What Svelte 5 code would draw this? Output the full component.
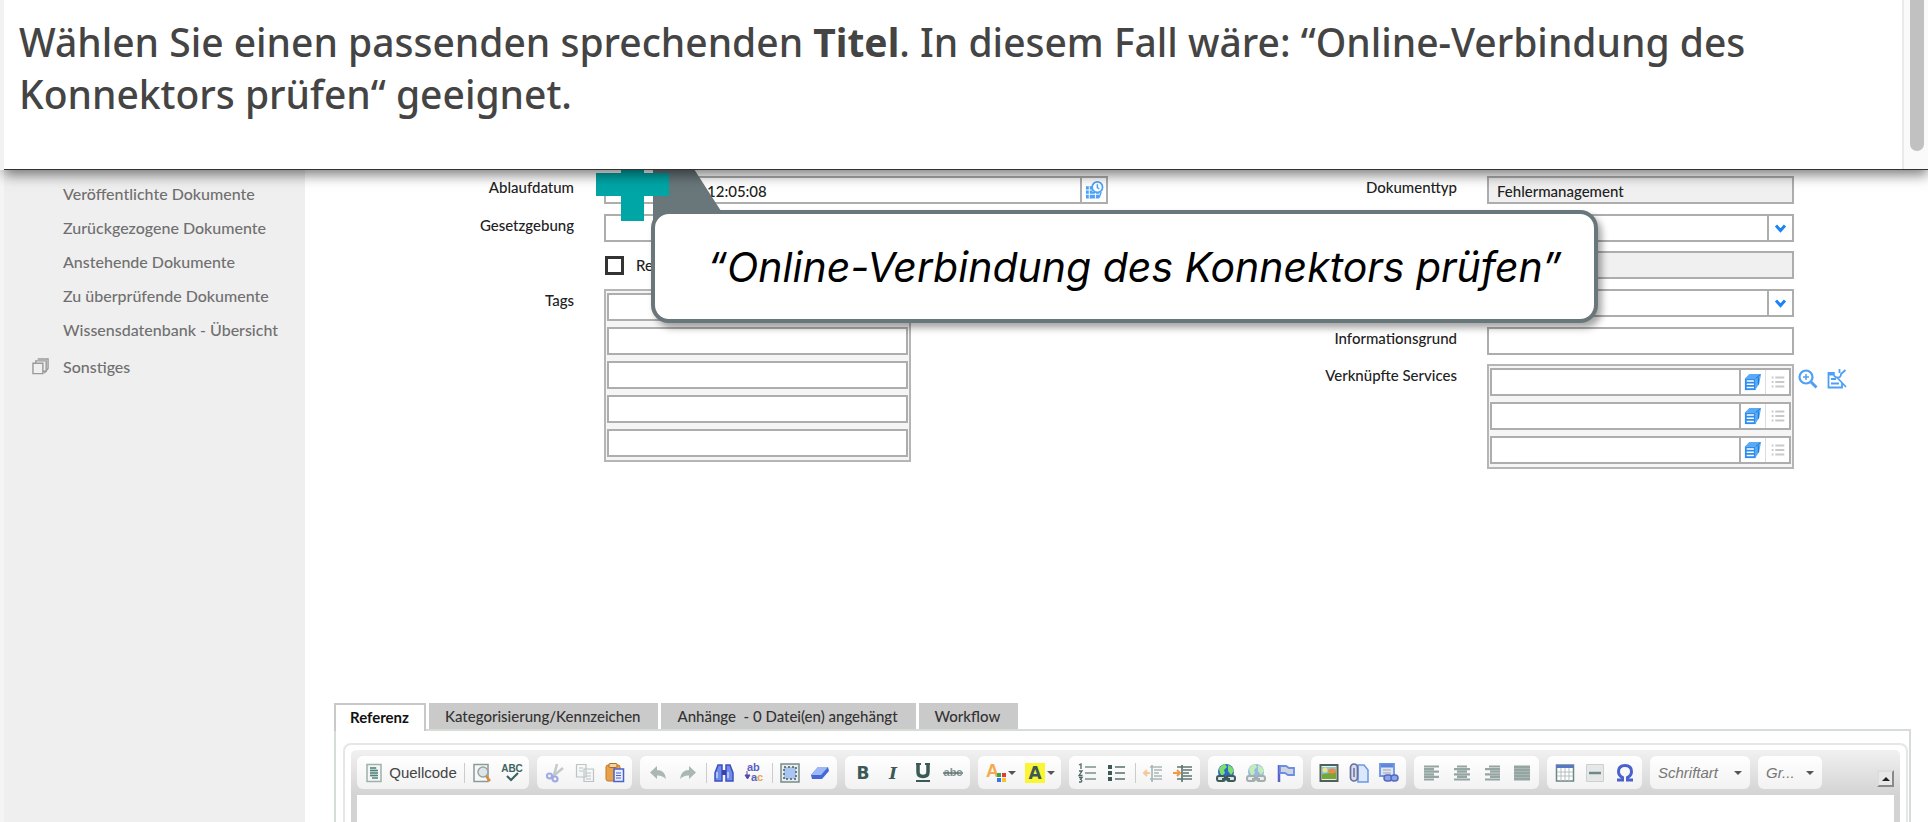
<script>
  const documents = [
    'Veröffentlichte Dokumente',
    'Zurückgezogene Dokumente',
    'Anstehende Dokumente',
    'Zu überprüfende Dokumente',
    'Wissensdatenbank - Übersicht'
  ];
  const tabs = ['Referenz', 'Kategorisierung/Kennzeichen', 'Anhänge \u00a0- 0 Datei(en) angehängt', 'Workflow'];
  let active = $state(0);

  const globe = '<circle cx="10" cy="9" r="8" fill="#2f66c8"/><path d="M3 6Q5 2 9 1L11 4 8 7 9 10 6 13 4 10ZM12 2Q16 3 18 8L15 12 12 8Z" fill="#7be06a"/><g fill="#dfe5e3" stroke="#3d5b58" stroke-width="2"><rect x="1" y="13" width="8" height="5" rx="2"/><rect x="11" y="13" width="8" height="5" rx="2"/><path d="M6 16H14"/></g>';
  const glyph = (t, attrs = '') => `<text x="10" y="16" text-anchor="middle" font-family="DejaVu Sans" font-size="17" font-weight="bold" fill="#3b5a57" ${attrs}>${t}</text>`;
  const lines = (rows, color = '#94a5a2') => `<path stroke="${color}" stroke-width="2.2" d="${rows.map(([a, b], i) => `M${a} ${3.5 + i * 2.6}H${b}`).join('')}"/>`;

  const icons = {
    source: '<path d="M3 1.5H17V18.500H3Z" fill="#f3f6f5" stroke="#9fb0ad" stroke-width="1.500"/><path d="M6 4H13V14H6Z" fill="#cfe6dc"/><path d="M6 5H12M6 7.500H14M6 10H14M6 12.500H14M8 15H14" stroke="#55807c" stroke-width="1.300"/>',
    preview: '<path d="M2 1.500H16V18.500H2Z" fill="#f7f8f8" stroke="#8b9b99" stroke-width="1.500"/><circle cx="11" cy="9" r="5" fill="#dce5e8" stroke="#98a3a5" stroke-width="1.500"/><path d="M14 13L18 18" stroke="#e08a30" stroke-width="2.500"/>',
    spell: '<text x="10" y="9" text-anchor="middle" font-family="Liberation Sans" font-size="10" font-weight="bold" fill="#3b6460">ABC</text><path d="M5 13L9 17 16 10" fill="none" stroke="#3b6460" stroke-width="2.2"/>',
    cut: '<g opacity=".5"><path d="M12 1L9 12M18 5L7 14" stroke="#8c9c9c" stroke-width="2.500"/><circle cx="4.500" cy="13" r="2.500" fill="none" stroke="#4a5fd0" stroke-width="2.2"/><circle cx="10" cy="16" r="2.500" fill="none" stroke="#4a5fd0" stroke-width="2.2"/></g>',
    copy: '<g opacity=".5" fill="#f4f7f6" stroke="#7d9290" stroke-width="1.200"><path d="M1.500 1.500H11V14H1.500ZM9 6H18.500V18.500H9Z"/><path d="M4 5H8M4 8H8M11 10H16M11 13H16M11 16H16"/></g>',
    paste: '<rect x="1" y="2" width="14" height="16" rx="2" fill="#e9a04a" stroke="#c47b26"/><rect x="4" y="0.500" width="8" height="4" rx="1" fill="#f3d3a0" stroke="#a66d2d"/><path d="M9 6H18.500V18.500H9Z" fill="#e9efff" stroke="#4b62c8" stroke-width="1.500"/><path d="M11 10H16M11 12.500H16M11 15H16" stroke="#4b62c8"/>',
    undo: '<path d="M9 3V7Q17 7 18 16Q14 12 9 12.500V16L2 9.500Z" fill="#a9b7b5"/>',
    redo: '<path d="M11 3V7Q3 7 2 16Q6 12 11 12.500V16L18 9.500Z" fill="#a9b7b5"/>',
    find: '<path d="M4 2H8V18H1V10ZM16 2H12V18H19V10Z" fill="#6f8de8" stroke="#3c4fc0" stroke-width="1.500"/><path d="M8 7H12V12H8Z" fill="#3c3fae"/><path d="M3 9V15M14 9V15" stroke="#c6d6ff" stroke-width="1.500"/>',
    replace: '<g font-family="Liberation Sans" font-weight="bold" font-size="11"><text x="3" y="8" fill="#5a5fc4">ab</text><text x="7" y="18" fill="#5a5fc4">a</text><text x="13" y="18" fill="#f0a050">c</text></g><path d="M3 8V13M1 12H6L3.500 16Z" stroke="#5048a8" fill="#5048a8"/>',
    select: '<path d="M1 1H19V19H1Z" fill="#e8eeee" stroke="#7b8b8b" stroke-width="1.500"/><path d="M4 4H16V16H4Z" fill="#a9c6f3" stroke="#49615f" stroke-width="1.500" stroke-dasharray="2 2"/>',
    eraser: '<path d="M8 4H18L19 8 12 16H2L1 12Z" fill="#4468d8"/><path d="M8 4H18L11 12H1Z" fill="#9db9f8"/>',
    bold: glyph('B'),
    italic: glyph('I', 'font-style="italic" style="font-family:DejaVu Serif"'),
    underline: '<path d="M5 1V9Q5 13.500 10 13.500T15 9V1" fill="none" stroke="#3b5a57" stroke-width="3.500"/><path d="M3 1H8M12 1H17M3 18H17" stroke="#3b5a57" stroke-width="2"/>',
    strike: '<text x="10" y="13" text-anchor="middle" font-family="Liberation Sans" font-weight="bold" font-size="11" fill="#81938f">abc</text><path d="M0 10H20" stroke="#5c7370" stroke-width="1.500"/>',
    color: '<text x="0" y="14" font-family="Liberation Sans" font-size="18" font-weight="bold" fill="#f6a94f">A</text><path d="M11 10H15V14H11Z" fill="#36a648"/><path d="M16 10H20V14H16Z" fill="#e5392e"/><path d="M11 15H15V19H11Z" fill="#3d73e8"/><path d="M16 15H20V19H16Z" fill="#f5c32c"/>',
    highlight: '<path d="M0 0H20V20H0Z" fill="#fbf632"/>' + glyph('A'),
    numbered: '<path d="M8 4H19M8 10H19M8 16H19" stroke="#7b918e" stroke-width="1.700"/><path d="M2 2L4 1V6M2 8H5L2 12.500H5.500M2 14.500H5L3.500 16.500Q6 17.500 4 19H2" fill="none" stroke="#4c6966" stroke-width="1.300"/>',
    bullets: '<path d="M8 4H18M8 10H18M8 16H18" stroke="#55706d" stroke-width="1.700"/><path d="M1 2H5V6H1ZM1 8H5V12H1ZM1 14H5V18H1Z" fill="#3b5a57"/>',
    outdent: '<g opacity=".5"><path d="M7 10H1M4 7L1 10 4 13" stroke="#f09a45" stroke-width="2" fill="none"/><path d="M9 2V19M7 4H19M11 7H19M11 10H16M11 13H19M7 16H19" stroke="#5d7774" stroke-width="1.700"/></g>',
    indent: '<path d="M0 10H6M4 7L7 10 4 13" stroke="#f09a45" stroke-width="2" fill="none"/><path d="M9 2V19M4 4H19M10 7H19M10 10H16M10 13H19M4 16H19" stroke="#5d7774" stroke-width="1.700"/>',
    link: globe,
    unlink: `<g opacity=".45">${globe}</g>`,
    anchor: '<path d="M3 2V19" stroke="#5a62c8" stroke-width="2.500"/><path d="M4 3H10L13 5H18V12H12L9 10H4Z" fill="#cfd5dd" stroke="#6b8ce8" stroke-width="1.800"/>',
    image: '<path d="M1.500 2H18.500V18H1.500Z" fill="#eaf0d0" stroke="#50605e" stroke-width="2"/><path d="M3 4H17V11H3Z" fill="#7cc8f0"/><path d="M3 11L17 9V16H3Z" fill="#76a63c"/><ellipse cx="13" cy="8" rx="4" ry="2.500" fill="#f08a3c"/><circle cx="6" cy="7" r="2.500" fill="#f8e080"/>',
    attach: '<path d="M9 2H15L19 7V19H9Z" fill="#dbe8fb" stroke="#6a97e8" stroke-width="1.500"/><rect x="1.500" y="1" width="7" height="17" rx="3.500" fill="#d7dbee" stroke="#6a6f9c" stroke-width="1.700"/><path d="M5 5V14" stroke="#6a6f9c" stroke-width="1.500"/>',
    form: '<path d="M1 1H15V13H1Z" fill="#dbe6f8" stroke="#6d93e0" stroke-width="1.800"/><path d="M2 3H14" stroke="#5d86de" stroke-width="3"/><path d="M4 7H12M4 10H12" stroke="#c2c6cc" stroke-width="2"/><g fill="#8fa4e8" stroke="#5468c0" stroke-width="1.500"><rect x="5" y="12" width="8" height="6" rx="3"/><rect x="12" y="12" width="7" height="6" rx="3"/></g>',
    left: lines([[2, 17], [2, 12], [2, 17], [2, 12], [2, 17], [2, 12]]),
    center: lines([[5, 15], [2, 18], [5, 15], [2, 18], [5, 15], [2, 18]]),
    right: lines([[7, 18], [3, 18], [8, 18], [3, 18], [8, 18], [3, 18]]),
    justify: '<path d="M2 2.500H18V17.500H2Z" fill="#94a5a2"/><path d="M2 5.500H18M2 8.500H18M2 11.500H18M2 14.500H18" stroke="#a9b7b5"/>',
    table: '<path d="M1.500 2H18.500V18H1.500Z" fill="#fff" stroke="#6d8583" stroke-width="1.500"/><path d="M1 3.500H19" stroke="#5578c8" stroke-width="3"/><path d="M2 9H18M2 13H18M6 5V18M10 5V18M14 5V18" stroke="#b4c0be"/>',
    rule: '<path d="M1.500 1.500H18.500V18.500H1.500Z" fill="#e6e8e8" stroke="#ccd0d0"/><path d="M4 10H16" stroke="#6d8a88" stroke-width="2.500"/>',
    omega: '<path d="M2 17H7.500V14.500Q3.500 12.500 3.500 8.500Q3.500 2.500 10 2.500T16.500 8.500Q16.500 12.500 12.500 14.500V17H18" fill="none" stroke="#4a62cc" stroke-width="3"/>'
  };

  const groups = [
    [['cut', 'Ausschneiden'], ['copy', 'Kopieren'], ['paste', 'Einfügen']],
    [['undo', 'Rückgängig'], ['redo', 'Wiederherstellen'], null, ['find', 'Suchen'], ['replace', 'Ersetzen'], null, ['select', 'Alles auswählen'], ['eraser', 'Formatierung entfernen']],
    [['bold', 'Fett'], ['italic', 'Kursiv'], ['underline', 'Unterstrichen'], ['strike', 'Durchgestrichen']],
    [['color', 'Textfarbe', true], ['highlight', 'Hintergrundfarbe', true]],
    [['numbered', 'Nummerierte Liste'], ['bullets', 'Liste'], null, ['outdent', 'Einzug verkleinern'], ['indent', 'Einzug vergrößern']],
    [['link', 'Link'], ['unlink', 'Link entfernen'], ['anchor', 'Anker']],
    [['image', 'Bild'], ['attach', 'Anhang'], ['form', 'Verknüpfung']],
    [['left', 'Linksbündig'], ['center', 'Zentriert'], ['right', 'Rechtsbündig'], ['justify', 'Blocksatz']],
    [['table', 'Tabelle'], ['rule', 'Linie'], ['omega', 'Sonderzeichen']]
  ];
</script>

{#snippet icon(name)}
  <svg class="icon" viewBox="0 0 20 20" aria-hidden="true">{@html icons[name]}</svg>
{/snippet}

{#snippet dropdown(label)}
  <div class="field combo">
    <select aria-label={label}></select>
    <svg class="chevron" viewBox="0 0 12 9" aria-hidden="true"><path d="M1.500 1.500L6 6.500 10.500 1.500" fill="none" stroke="#1a84f5" stroke-width="3" /></svg>
  </div>
{/snippet}

<div class="page">
  <header class="instruction">
    <p>Wählen Sie einen passenden sprechenden <strong>Titel</strong>. In diesem Fall wäre: “Online-Verbindung des Konnektors prüfen“ geeignet.</p>
    <div class="track"><div class="thumb"></div></div>
  </header>

  <div class="workspace">
    <nav class="sidebar">
      <ul>
        {#each documents as item}
          <li><a href="#doc">{item}</a></li>
        {/each}
        <li class="other">
          <svg viewBox="0 0 18 18" aria-hidden="true"><g fill="#efefef" stroke="#9a9a9a" stroke-width="1.500"><path d="M6 1H17V11L13 16" /><path d="M4 3H15V14H4Z" /><path d="M1 5.500H11.500V16.500H1Z" /></g></svg>
          <a href="#other">Sonstiges</a>
        </li>
      </ul>
    </nav>

    <main>
      <form class="form">
        <div class="column left">
          <label for="expiry">Ablaufdatum</label>
          <div class="field date">
            <input id="expiry" value="12:05:08" />
            <button type="button" aria-label="Datum wählen">
              <svg viewBox="0 0 20 20" aria-hidden="true"><path d="M1 6H8V19H1ZM8 12H15V19H8Z" fill="#4da3f7" /><path d="M1 10H8M1 14.500H15M4.500 6V19M11 13V19" stroke="#fff" /><circle cx="13" cy="7" r="5.500" fill="#fff" stroke="#4da3f7" stroke-width="1.800" /><path d="M13 4V7.500L15 9M17 12L15 18" fill="none" stroke="#4da3f7" stroke-width="1.500" /></svg>
            </button>
          </div>
          <label for="law">Gesetzgebung</label>
          <div class="field"><input id="law" /></div>
          <span></span>
          <label class="check"><input type="checkbox" />Re</label>
          <label for="tag-0">Tags</label>
          <div class="list tags">
            {#each [0, 1, 2, 3, 4] as n}
              <div class="entry"><input id="tag-{n}" aria-label="Tags" /></div>
            {/each}
          </div>
        </div>

        <div class="column right">
          <label for="doctype">Dokumenttyp</label>
          <div class="field muted"><input id="doctype" value="Fehlermanagement" readonly /></div>
          <span></span>
          {@render dropdown('Auswahl')}
          <span></span>
          <div class="field muted"><input aria-label="Wert" readonly /></div>
          <span></span>
          {@render dropdown('Option')}
          <label for="reason">Informationsgrund</label>
          <div class="field"><input id="reason" /></div>
          <label for="service-0">Verknüpfte Services</label>
          <div class="services">
            <div class="list">
              {#each [0, 1, 2] as n}
                <div class="entry">
                  <input id="service-{n}" aria-label="Verknüpfte Services" />
                  <button type="button" class="pick" aria-label="Auswählen">
                    <svg viewBox="0 0 20 20" aria-hidden="true"><path d="M1 6L6 1H19L17 12 13 18V6Z" fill="#57aaf5" /><path d="M1 6H13V19H1Z" fill="#2d8cf0" /><path d="M3 9H11M3 12.500H11M3 16H11" stroke="#fff" stroke-width="1.700" /><path d="M13 6L18 2M16 5V13" stroke="#1c6fc8" /></svg>
                  </button>
                  <button type="button" class="details" aria-label="Liste">
                    <svg viewBox="0 0 20 20" aria-hidden="true"><path d="M3 5H5M7 5H17M3 10H5M7 10H17M3 15H5M7 15H17" stroke="#c9c9c9" stroke-width="2" /></svg>
                  </button>
                </div>
              {/each}
            </div>
            <div class="actions">
              <button type="button" aria-label="Suchen">
                <svg viewBox="0 0 20 20" aria-hidden="true"><g fill="none" stroke="#4da0f5"><circle cx="8" cy="8" r="6.500" stroke-width="2.200" /><path d="M13 13L18.500 18.500" stroke-width="3" /><path d="M8 5V11M5 8H11" stroke-width="1.500" /></g></svg>
              </button>
              <button type="button" aria-label="Bearbeiten">
                <svg viewBox="0 0 20 20" aria-hidden="true"><g fill="none" stroke="#4da0f5" stroke-width="1.800"><path d="M6 4H1.500V18.500H15V14M4 10H9M4 14.500H12" /><path d="M7 3Q6 8 10 8.500T14 5L18.500 1M12.500 0V4M10 8.500L19 18" /><path d="M2 5H7" stroke-width="3" /></g></svg>
              </button>
            </div>
          </div>
        </div>
      </form>

      <section class="reference">
        <div class="tabs" role="tablist">
          {#each tabs as tab, i}
            <button type="button" role="tab" aria-selected={i === active} class:active={i === active} onclick={() => (active = i)}>{tab}</button>
          {/each}
        </div>
        <div class="panel">
          <div class="editor">
            <div class="toolbar">
              <div class="group">
                <button type="button" class="source">{@render icon('source')}Quellcode</button>
                <i class="sep"></i>
                <button type="button" aria-label="Vorschau">{@render icon('preview')}</button>
                <button type="button" aria-label="Rechtschreibprüfung">{@render icon('spell')}</button>
              </div>
              {#each groups as group}
                <div class="group">
                  {#each group as tool}
                    {#if tool}
                      <button type="button" aria-label={tool[1]} class:menu={tool[2]}>
                        {@render icon(tool[0])}{#if tool[2]}<i class="caret"></i>{/if}
                      </button>
                    {:else}
                      <i class="sep"></i>
                    {/if}
                  {/each}
                </div>
              {/each}
              <button type="button" class="group style font">Schriftart<i class="caret"></i></button>
              <button type="button" class="group style">Gr...<i class="caret"></i></button>
              <button type="button" class="collapse" aria-label="Symbolleiste einklappen"><i></i></button>
            </div>
            <textarea aria-label="Referenz"></textarea>
          </div>
        </div>
      </section>
    </main>
  </div>

  <svg class="pointer" viewBox="0 0 125 56" aria-hidden="true">
    <path d="M57 0H98L125 42H75Q58 42 57 56Z" fill="#69767a" />
    <path d="M25 0H48V4H73V27H48V52H25V27H0V4H25Z" fill="#00a5a6" />
  </svg>
  <div class="callout">“Online-Verbindung des Konnektors prüfen”</div>
</div>

<style>
  :global(body) { margin: 0; background: #fff; }
  .page, .page * { box-sizing: border-box; }
  .page {
    position: relative;
    display: flex;
    flex-direction: column;
    height: 100vh;
    overflow: hidden;
    color: #222;
    font-family: Lato, "Noto Sans", sans-serif;
    font-size: 15px;
    font-weight: 500;
  }
  button, input, select, textarea { font: inherit; color: inherit; margin: 0; padding: 0; border: 0; background: none; border-radius: 0; outline: 0; }
  button { display: flex; align-items: center; justify-content: center; cursor: pointer; }
  input, select, textarea { min-width: 0; width: 100%; }

  .instruction {
    position: relative;
    z-index: 3;
    display: flex;
    flex: none;
    height: 170px;
    margin-left: 4px;
    background: #fff;
    border-bottom: 1px solid #333;
    box-shadow: 0 5px 12px rgba(0, 0, 0, .5);
  }
  .instruction::before { content: ""; position: absolute; left: -4px; top: 0; width: 4px; height: 170px; background: #f2f2f2; }
  .instruction p { flex: 1; margin: 0; padding: 16px 15px; color: #444; font: 500 39px/52px "Noto Sans", sans-serif; }
  .track { width: 26px; padding: 0 4px 0 6px; border-left: 2px solid #eaeaea; background: #fafafa; }
  .thumb { height: 151px; border-radius: 0 0 8px 8px; background: #c1c1c1; }

  .workspace { display: flex; flex: 1; min-height: 0; }
  .sidebar { flex: none; width: 305px; background: #efefef; border-left: 4px solid #f5f5f5; color: #707070; font-size: 16px; }
  .sidebar ul { margin: 0; padding: 6px 0 0 59px; list-style: none; }
  .sidebar li { display: flex; align-items: center; height: 34px; white-space: nowrap; }
  .sidebar a { color: inherit; text-decoration: none; }
  .sidebar .other { height: 40px; margin-left: -31px; gap: 14px; }
  .other svg { width: 17px; height: 17px; }

  main { display: flex; flex: 1; flex-direction: column; min-width: 0; }
  .form { display: flex; justify-content: space-between; height: 533px; padding: 6px 81px 0 0; }
  .column { display: grid; align-content: start; column-gap: 30px; }
  .left { grid-template: 38px 37px 38px auto / 239px minmax(0, 504px); margin-left: 30px; }
  .right { grid-template: 38px 37px 38px 38px 37px auto / auto 360px; }
  .column > label:not(.check) { padding-top: 1px; line-height: 20px; text-align: right; white-space: nowrap; }
  .field { display: flex; height: 28px; border: 2px solid #adadad; background: #fff; }
  .right .field { width: 307px; }
  .field input { padding: 2px 0 0 8px; }
  .date input { padding-left: 101px; }
  .muted { background: #f0f0f0; }
  .date button { flex: none; width: 26px; border-left: 2px solid #adadad; }
  .date svg { width: 19px; height: 20px; }
  .combo { position: relative; }
  .combo select { appearance: none; }
  .combo::after { content: ""; position: absolute; right: 23px; top: 0; height: 24px; border-left: 2px solid #adadad; }
  .chevron { position: absolute; right: 5px; top: 8px; width: 13px; height: 9px; pointer-events: none; }
  .check { display: flex; align-items: center; gap: 12px; height: 28px; padding-left: 1px; }
  .check input { appearance: none; width: 19px; height: 19px; border: 3px solid #333; background: #fff; }
  .list { width: 307px; padding: 2px 1px 3px; border: 2px solid #b5b5b5; background: #f5f5f5; display: grid; gap: 6px; }
  .entry { display: flex; height: 28px; border: 2px solid #adadad; background: #fff; }
  .entry button { flex: none; width: 26px; }
  .entry .details { width: 24px; border-left: 1px solid #ddd; }
  .pick { border-left: 2px solid #adadad; }
  .pick svg, .details svg { width: 18px; height: 18px; }
  .services { display: flex; }
  .actions { display: flex; gap: 9px; padding: 5px 0 0 4px; align-items: flex-start; }
  .actions svg { display: block; width: 20px; height: 20px; }

  .reference { display: flex; flex: 1; flex-direction: column; min-height: 0; margin: 0 17px 0 29px; }
  .tabs { display: flex; gap: 3px; }
  .tabs button { position: relative; height: 26px; padding: 0 18px 0 16px; background: #cacaca; color: #333; white-space: nowrap; }
  .tabs .active { z-index: 1; height: 28px; margin-bottom: -2px; padding: 0 15px 2px 14px; border: 2px solid #c8c8c8; border-bottom: 0; background: #fff; color: #111; font-weight: bold; }
  .panel { flex: 1; min-height: 0; padding: 12px 1px 0 7px; border: 2px solid #d6dcd6; border-bottom: 0; }
  .editor { display: flex; flex-direction: column; height: 100%; padding: 5px 6px 0; border: 2px solid #e6e6e6; border-bottom: 0; border-radius: 8px 8px 0 0; }
  .toolbar { display: flex; flex: none; align-items: flex-start; gap: 8px; height: 45px; padding: 6px 6px 0; border-radius: 5px 5px 0 0; background: linear-gradient(#f1f1f1, #d3d3d3); }
  .group { display: flex; flex: none; align-items: center; height: 33px; padding: 0 2px 0 3px; border-radius: 6px; background: linear-gradient(#fff, #f2f2f2); color: #444; font-family: "Liberation Sans", sans-serif; font-weight: 400; }
  .group button { width: 30px; height: 30px; }
  .group .source { width: 101px; gap: 5px; }
  .group .menu { width: 39px; gap: 2px; }
  .icon { flex: none; width: 20px; height: 20px; overflow: visible; }
  .sep { width: 6px; height: 20px; background: linear-gradient(#ccc, #ccc) center / 1px 100% no-repeat; }
  .caret { border: 4px solid transparent; border-top-color: #555; border-bottom: 0; }
  .style { justify-content: space-between; width: 64px; padding: 0 8px; color: #777; font-style: italic; }
  .font { width: 100px; }
  .collapse { align-self: flex-end; width: 17px; height: 17px; margin: 0 0 8px auto; border: 2px outset #ddd; background: #e8e8e8; }
  .collapse i { border: 4px solid transparent; border-bottom-color: #222; border-top: 0; }
  textarea { flex: 1; min-height: 0; border: solid #d3d3d3; border-width: 0 6px; background: #fff; resize: none; }

  .pointer { position: absolute; z-index: 2; left: 596px; top: 169px; width: 125px; height: 56px; }
  .callout {
    position: absolute;
    z-index: 1;
    left: 651px;
    top: 210px;
    width: 947px;
    height: 113px;
    padding-left: 20px;
    border: 4px solid #69767a;
    border-radius: 18px;
    background: #fff;
    box-shadow: 4px 5px 7px rgba(0, 0, 0, .35);
    color: #000;
    font: italic 41px/107px Inter, sans-serif;
    text-align: center;
    white-space: nowrap;
  }
</style>
